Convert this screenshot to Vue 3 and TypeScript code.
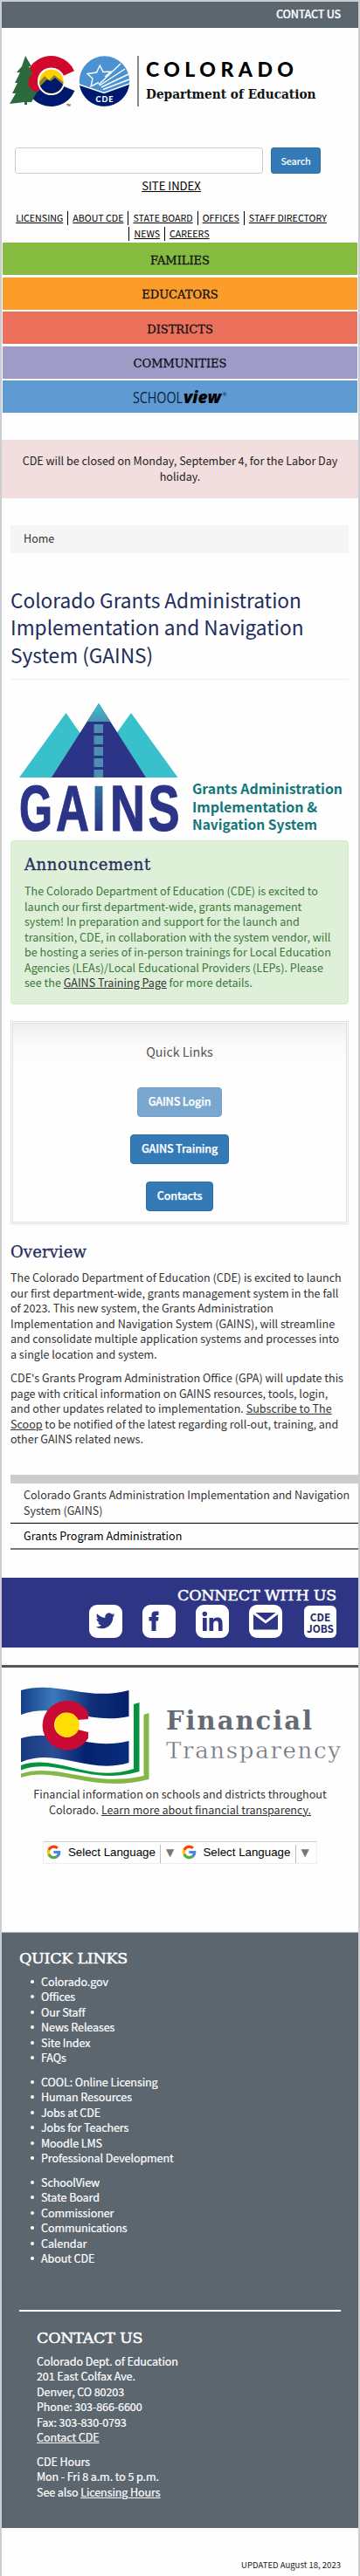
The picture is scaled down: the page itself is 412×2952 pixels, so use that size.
<script setup lang="ts">
interface Bar { label: string; tone: string }

const navRows: string[][] = [
  ['LICENSING', 'ABOUT CDE', 'STATE BOARD', 'OFFICES', 'STAFF DIRECTORY'],
  ['NEWS', 'CAREERS'],
]
const bars: Bar[] = [
  { label: 'FAMILIES', tone: 'green' },
  { label: 'EDUCATORS', tone: 'orange' },
  { label: 'DISTRICTS', tone: 'red' },
  { label: 'COMMUNITIES', tone: 'purple' },
]
const linkGroups: string[][] = [
  ['Colorado.gov', 'Offices', 'Our Staff', 'News Releases', 'Site Index', 'FAQs'],
  ['COOL: Online Licensing', 'Human Resources', 'Jobs at CDE', 'Jobs for Teachers', 'Moodle LMS', 'Professional Development'],
  ['SchoolView', 'State Board', 'Commissioner', 'Communications', 'Calendar', 'About CDE'],
]
const dashes = [30, 43, 56, 69, 82]
</script>

<template>
  <div class="page">
    <div class="topbar"><a>CONTACT US</a></div>

    <header class="brand">
      <svg class="logo" width="356" height="62" viewBox="9 62 356 62">
        <path d="M78.900 83.900 A22.300 22.300 0 1 0 40.700 106.400" fill="none" stroke="#d0082c" stroke-width="13.400" />
        <path d="M40.700 106.400 A22.300 22.300 0 0 0 79.200 101.400" fill="none" stroke="#001970" stroke-width="13.400" />
        <path d="M29 64 L36 76 L33 76 L37 84 Q30 91 34 101 L42 106 L36 117 L31 117 L31 120 L28 120 L28 117 L11 119 L18 107 L14 107 L20 95 L17 95 L23 83 L19 83 L25 76 Z" fill="#2a6a3c" />
        <circle cx="58.800" cy="93.500" r="15.500" fill="#fff" />
        <circle cx="58.800" cy="93.500" r="13.800" fill="#ffd100" />
        <path d="M45 94 L51 87 L56 92 L62 86 L72.500 94 A13.800 13.800 0 0 1 45 94Z" fill="#8a8527" />
        <path d="M46 98.500 L54 91 L58 93 L63 89 L72 97 A13.800 13.800 0 0 1 46 98.500Z" fill="#001970" />
        <circle cx="119.500" cy="93" r="28.700" fill="#4b92d3" />
        <path d="M91 97 L119 106 L148 96 A28.700 28.700 0 0 1 91 97Z" fill="#001970" />
        <path d="M91 97 L119 106.500 L148 96" fill="none" stroke="#fff" stroke-width="1.500" />
        <path d="M113 94.500 L104 99 L106 90 L100 84.500 L110.500 83 L114.300 75 L118 82.500 L127 82 L120 88 M113 97 L138 73 M114 98 L143 79 M116 100 L147 85 M118 102.500 L148 91" fill="none" stroke="#fff" stroke-width="1.400" />
        <text x="109.500" y="116.500" textLength="20" class="t-lato" font-size="9" fill="#fff">CDE</text>
        <text x="76" y="122" font-size="3" class="t-lato" fill="#333">TM</text>
        <rect x="157" y="64" width="2" height="58" fill="#888" />
        <text x="167" y="88" textLength="169" class="t-lato" font-size="23" fill="#000">COLORADO</text>
        <text x="167" y="113" textLength="194.500" lengthAdjust="spacingAndGlyphs" class="t-slab-b" font-size="14" fill="#111">Department of Education</text>
      </svg>
    </header>

    <div class="search">
      <input type="text" aria-label="Search" />
      <button type="button">Search</button>
    </div>
    <div class="siteindex"><a>SITE INDEX</a></div>

    <nav class="nav">
      <div v-for="(row, i) in navRows" :key="i" class="navrow" :class="{ cont: i > 0 }">
        <span v-for="item in row" :key="item" class="navitem"><a>{{ item }}</a></span>
      </div>
    </nav>

    <div class="bars">
      <div v-for="b in bars" :key="b.label" class="bar" :class="b.tone">{{ b.label }}</div>
      <div class="bar blue">
        <svg width="110" height="24" viewBox="0 0 110 24">
          <text x="1" y="16.500" textLength="57" lengthAdjust="spacingAndGlyphs" class="t-school" font-size="18" fill="#0a1f3c">SCHOOL</text>
          <text x="59" y="16.500" textLength="43" lengthAdjust="spacingAndGlyphs" class="t-view" font-size="20" fill="#000">view</text>
          <text x="103.500" y="9" class="t-school" font-size="6" fill="#0a1f3c">®</text>
        </svg>
      </div>
    </div>

    <div class="alert">CDE will be closed on Monday, September 4, for the Labor Day<br />holiday.</div>
    <div class="crumb">Home</div>

    <h1>Colorado Grants Administration<br />Implementation and Navigation<br />System (GAINS)</h1>

    <svg class="gains" width="388" height="160" viewBox="10 0 388 160">
      <defs>
        <linearGradient id="peak" x1="0" y1="0" x2="0" y2="1"><stop offset="0" stop-color="#38c5cf" /><stop offset="1" stop-color="#4a93b4" /></linearGradient>
        <linearGradient id="eye" gradientUnits="userSpaceOnUse" x1="0" y1="98" x2="0" y2="152"><stop offset="0" stop-color="#35739f" /><stop offset="1" stop-color="#2b3486" /></linearGradient>
      </defs>
      <path d="M75.500 17 L127 91 H22Z M150 17 L203.500 91 H97Z" fill="#38c0cb" />
      <path d="M113 6 L167 91 H59Z" fill="#2b3486" />
      <path d="M113 6 L126 27 H100Z" fill="url(#peak)" />
      <rect v-for="(y, i) in dashes" :key="i" x="107.500" :y="y" width="10.500" :height="i === 4 ? 9 : 10" fill="#4c8fb3" />
      <g class="t-arial" font-size="74" fill="#2b3486" stroke="#2b3486" stroke-width="1.200">
        <text x="22" y="151.500" textLength="38" lengthAdjust="spacingAndGlyphs">G</text>
        <text x="64" y="151.500" textLength="38" lengthAdjust="spacingAndGlyphs">A</text>
        <text x="126" y="151.500" textLength="40" lengthAdjust="spacingAndGlyphs">N</text>
        <text x="169.500" y="151.500" textLength="36" lengthAdjust="spacingAndGlyphs">S</text>
        <text x="104.500" y="151.500" textLength="17" lengthAdjust="spacingAndGlyphs" fill="url(#eye)" stroke="none">I</text>
      </g>
      <g class="t-sans" font-size="15.500" fill="#12767a">
        <text x="220" y="110" textLength="172" lengthAdjust="spacingAndGlyphs">Grants Administration</text>
        <text x="220" y="131" textLength="143" lengthAdjust="spacingAndGlyphs">Implementation &amp;</text>
        <text x="220" y="151" textLength="143" lengthAdjust="spacingAndGlyphs">Navigation System</text>
      </g>
    </svg>

    <section class="announce">
      <h2>Announcement</h2>
      <p>The Colorado Department of Education (CDE) is excited to<br />launch our first department-wide, grants management<br />system! In preparation and support for the launch and<br />transition, CDE, in collaboration with the system vendor, will<br />be hosting a series of in-person trainings for Local Education<br />Agencies (LEAs)/Local Educational Providers (LEPs). Please<br />see the <a>GAINS Training Page</a> for more details.</p>
    </section>

    <section class="quick">
      <div class="qtitle">Quick Links</div>
      <a class="btn faded">GAINS Login</a>
      <a class="btn">GAINS Training</a>
      <a class="btn">Contacts</a>
    </section>

    <section class="overview">
      <h2>Overview</h2>
      <p>The Colorado Department of Education (CDE) is excited to launch<br />our first department-wide, grants management system in the fall<br />of 2023. This new system, the Grants Administration<br />Implementation and Navigation System (GAINS), will streamline<br />and consolidate multiple application systems and processes into<br />a single location and system.</p>
      <p>CDE's Grants Program Administration Office (GPA) will update this<br />page with critical information on GAINS resources, tools, login,<br />and other updates related to implementation. <a>Subscribe to The<br />Scoop</a> to be notified of the latest regarding roll-out, training, and<br />other GAINS related news.</p>
    </section>

    <aside class="side">
      <div class="s1">Colorado Grants Administration Implementation and Navigation<br />System (GAINS)</div>
      <div class="s2">Grants Program Administration</div>
    </aside>

    <section class="connect">
      <h3>CONNECT WITH US</h3>
      <div class="icons">
        <svg width="38" height="38" viewBox="0 0 38 38"><rect width="38" height="38" rx="9" fill="#fff" /><path transform="translate(7.700 7.400) scale(.91)" fill="#2e3584" d="M23.953 4.570a10 10 0 01-2.825.775 4.958 4.958 0 002.163-2.723c-.951.555-2.005.959-3.127 1.184a4.920 4.920 0 00-8.384 4.482C7.690 8.095 4.067 6.130 1.640 3.162a4.822 4.822 0 00-.666 2.475c0 1.710.870 3.213 2.188 4.096a4.904 4.904 0 01-2.228-.616v.060a4.923 4.923 0 003.946 4.827 4.996 4.996 0 01-2.212.085 4.936 4.936 0 004.604 3.417 9.867 9.867 0 01-6.102 2.105c-.390 0-.779-.023-1.170-.067a13.995 13.995 0 007.557 2.209c9.053 0 13.998-7.496 13.998-13.985 0-.210 0-.420-.015-.630A9.935 9.935 0 0024 4.590z" /></svg>
        <svg width="38" height="38" viewBox="0 0 38 38"><rect width="38" height="38" rx="9" fill="#fff" /><path d="M10.500 30 V18.500 H7.500 V14 H10.500 V12 C10.500 8.500 12.500 7.500 15 7.500 H18.500 V12 H16.800 C15.800 12 15.500 12.500 15.500 13.500 V14 H18.500 L18 18.500 H15.500 V30Z" fill="#2e3584" /></svg>
        <svg width="38" height="38" viewBox="0 0 38 38"><rect width="38" height="38" rx="9" fill="#fff" /><path d="M8 15h4.700v15H8zM15.500 15H20v2c1-1.600 2.600-2.400 4.800-2.400 4.400 0 5.800 2.700 5.800 7V30H26v-7.600c0-2.300-.5-3.800-2.600-3.800-2.300 0-3.200 1.600-3.200 3.800V30h-4.700z" fill="#2e3584" /><circle cx="10.300" cy="10.500" r="2.700" fill="#2e3584" /></svg>
        <svg width="38" height="38" viewBox="0 0 38 38"><rect width="38" height="38" rx="9" fill="#fff" /><path d="M5 11 L19 21.500 L33 11 V28.500 H5Z M7.500 9 H30.500 L19 18Z" fill="#2e3584" /></svg>
        <div class="jobs"><span>CDE</span><span>JOBS</span></div>
      </div>
    </section>

    <section class="fin">
      <svg width="372" height="120" viewBox="20 0 372 120">
        <defs>
          <linearGradient id="sky" x1="0" y1="0" x2="1" y2="0"><stop offset="0" stop-color="#143f86" /><stop offset=".3" stop-color="#3c7abb" /><stop offset=".65" stop-color="#0f2f78" /><stop offset="1" stop-color="#051f6c" /></linearGradient>
          <linearGradient id="sea" x1="0" y1="0" x2="1" y2="0"><stop offset="0" stop-color="#16397f" /><stop offset=".3" stop-color="#2c4d96" /><stop offset=".6" stop-color="#04226e" /><stop offset="1" stop-color="#0a2d7c" /></linearGradient>
        </defs>
        <path d="M24 5 C65 -7 100 18 147.500 5 V35 C100 45 65 18 24 33Z" fill="url(#sky)" />
        <path d="M24 60 C65 48 100 75 147.500 63 V88 C100 102 65 70 24 87.500Z" fill="url(#sea)" />
        <path d="M24 91 C65 77 100 112 153 95 V21 L159.500 19 V98 C103 115 65 81 24 96.500Z" fill="#059341" />
        <path d="M24 100.500 C65 87 105 117 164.500 103 V33 L170.500 31 V107 C107 124 65 91 24 105Z" fill="#84b747" />
        <path d="M101 30.500 A28.300 28.300 0 1 0 101 60 L101 53 L89 50 A14 14 0 1 1 89 39 L101 38Z" fill="#c80a35" />
        <circle cx="76.700" cy="44.700" r="14.200" fill="#ffdd04" />
        <text x="190" y="50" textLength="167" class="t-slab-b" font-size="29" fill="#646b75">Financial</text>
        <text x="190" y="82.500" textLength="200" class="t-slab" font-size="26" fill="#6d7279" stroke="#fff" stroke-width=".4">Transparency</text>
      </svg>
      <p>Financial information on schools and districts throughout<br />Colorado. <a>Learn more about financial transparency.</a></p>
    </section>

    <div class="translate">
      <div v-for="n in 2" :key="n" class="lang">
        <svg width="17" height="17" viewBox="2 2 44 44"><path fill="#FFC107" d="M43.611 20.083H42V20H24v8h11.303c-1.649 4.657-6.080 8-11.303 8-6.627 0-12-5.373-12-12s5.373-12 12-12c3.059 0 5.842 1.154 7.961 3.039l5.657-5.657C34.046 6.053 29.268 4 24 4 12.955 4 4 12.955 4 24s8.955 20 20 20 20-8.955 20-20c0-1.341-.138-2.650-.389-3.917z" /><path fill="#FF3D00" d="M6.306 14.691l6.571 4.819C14.655 15.108 18.961 12 24 12c3.059 0 5.842 1.154 7.961 3.039l5.657-5.657C34.046 6.053 29.268 4 24 4 16.318 4 9.656 8.337 6.306 14.691z" /><path fill="#4CAF50" d="M24 44c5.166 0 9.860-1.977 13.409-5.192l-6.190-5.238A11.910 11.910 0 0124 36c-5.202 0-9.619-3.317-11.283-7.946l-6.522 5.025C9.505 39.556 16.227 44 24 44z" /><path fill="#4285F4" d="M43.611 20.083H42V20H24v8h11.303a12.040 12.040 0 01-4.087 5.571l6.190 5.238C36.971 39.205 44 34 44 24c0-1.341-.138-2.650-.389-3.917z" /></svg>
        <span class="sel">Select Language</span><span class="tri">▼</span>
      </div>
    </div>

    <footer class="foot">
      <h3>QUICK LINKS</h3>
      <ul v-for="(g, i) in linkGroups" :key="i">
        <li v-for="l in g" :key="l">{{ l }}</li>
      </ul>
      <div class="contact">
        <h3>CONTACT US</h3>
        <p>Colorado Dept. of Education<br />201 East Colfax Ave.<br />Denver, CO 80203<br />Phone: 303-866-6600<br />Fax: 303-830-0793<br /><a>Contact CDE</a></p>
        <p>CDE Hours<br />Mon - Fri 8 a.m. to 5 p.m.<br />See also <a>Licensing Hours</a></p>
      </div>
    </footer>
    <div class="updated">UPDATED August 18, 2023</div>
  </div>
</template>

<style>
body { margin: 0; background: #fff; }
</style>

<style scoped>
.page, .page * { box-sizing: border-box; }
.page {
  width: 412px; height: 2952px; overflow: hidden;
  border: 2px solid #cccdd1; border-bottom: 0; background: #fefefe;
  font: 12.55px/17.5px "Noto Sans CJK SC", "Open Sans", sans-serif; color: #333;
  white-space: nowrap;
}
svg { overflow: visible; }
h1, h2, h3, p, ul { margin: 0; padding: 0; font-weight: normal; }
a { text-decoration: underline; }
h2, h3, .bar { font-family: "DejaVu Serif", serif; -webkit-text-stroke: .3px currentColor; }
.t-lato { font-family: Lato, sans-serif; font-weight: 900; }
.t-slab-b { font-family: "DejaVu Serif", serif; font-weight: bold; }
.t-slab { font-family: "DejaVu Serif", serif; }
.t-school { font-family: "Open Sans", sans-serif; font-weight: 400; }
.t-view { font-family: "Open Sans", sans-serif; font-weight: 800; font-style: italic; }
.t-arial { font-family: "Liberation Sans", Arial, sans-serif; font-weight: bold; }
.t-sans { font-family: "Noto Sans CJK SC", sans-serif; font-weight: bold; }
.bar svg { -webkit-text-stroke: 0; }

.topbar { height: 30px; background: #5c666f; color: #fff; text-align: right; padding: 5px 20px 0 0; font-weight: 500; letter-spacing: -.22px; -webkit-text-stroke: .2px #fff; }
.topbar a { text-decoration: none; }
.brand { height: 137px; padding: 30px 0 0 7px; }
.logo { display: block; }
.search { display: flex; gap: 9px; padding-left: 15px; height: 30px; }
.search input { width: 284px; height: 30px; border: 1px solid #ccc; border-radius: 3px; background: #fff; }
.search button { width: 57px; height: 30px; border: 1px solid #2e6da4; border-radius: 3px; background: #337ab7; color: #fff; font: 500 10.8px/17px "Noto Sans CJK SC", sans-serif; letter-spacing: -.2px; padding: 0; }
.siteindex { width: 388px; text-align: center; color: #000; font-size: 13.100px; padding-top: 5px; height: 43px; }
.nav { height: 36px; width: 388px; font-size: 10.650px; color: #000; }
.navrow { display: flex; justify-content: center; height: 17.500px; }
.navitem { padding: 0 5px; border-left: 1px solid #000; height: 16px; line-height: 15.500px; }
.cont .navitem { line-height: 16.500px; }
.navrow:not(.cont) .navitem:first-child { border-left: 0; }
.bars { display: flex; flex-direction: column; gap: 2.500px; padding: 0 1px; }
.bar { height: 37px; display: flex; align-items: center; justify-content: center; color: #111; font-size: 13px; padding-top: 4px; }
.green { background: #86bc40; }
.orange { background: #fb9c2b; }
.red { background: #ec715d; }
.purple { background: #9e9bc9; }
.blue { background: #5f9ad2; }
.alert { margin-top: 31px; height: 67px; background: #f2dede; border: 1px solid #ebdcdf; text-align: center; padding-top: 14px; color: #222; }
.crumb { margin: 31px 11px 0 10px; height: 32px; background: #f5f5f5; padding: 6px 15px; }
h1 { margin: 38px 11px 0 10px; height: 107px; font-size: 22.650px; line-height: 31.300px; color: #222c5c; border-bottom: 1px solid #eee; }
.gains { display: block; margin: 21px 0 0 8px; }
h2 { color: #262b60; font-size: 18px; line-height: 22px; }
.announce { margin: 3px 11px 0 10px; height: 188px; background: #dff0d8; border: 1px solid #d6e9c6; border-radius: 4px; padding: 16px 15px 0; color: #3c763d; }
.announce h2 { letter-spacing: .620px; }
.announce p { margin-top: 10px; }
.announce a { color: #333; }
.quick { margin: 19px 11px 0 10px; height: 233px; border: 3px double #e0e0e3; background: linear-gradient(#f0f0f0, #fafafa 24px, #fefefe 52px) padding-box; display: flex; flex-direction: column; align-items: center; }
.qtitle { color: #555; font-size: 14.300px; line-height: 20px; margin-top: 22px; margin-bottom: 31px; flex-shrink: 0; }
.btn { flex-shrink: 0; background: #337ab7; color: #fff; font-weight: 500; letter-spacing: -.150px; -webkit-text-stroke: .25px #fff; border: 1px solid #2e6da4; border-radius: 4px; height: 34px; line-height: 29px; padding: 0 12px; text-decoration: none; margin-bottom: 20px; }
.btn:last-child { margin-bottom: 0; }
.faded { opacity: .65; }
.overview { margin: 21px 0 0 10px; }
.overview h2 { margin-bottom: 9px; letter-spacing: .100px; }
.overview p { margin-bottom: 10px; }
.side { margin: 32.500px -2px 0 10px; border-top: 10px solid #ccc; height: 118px; }
.s1 { padding: 4px 15px 0; height: 46px; border-bottom: 1px solid #000; }
.s2 { padding: 5px 15px 0; height: 30px; border-bottom: 2px solid #77787b; color: #000; margin-right: 2px; }
.connect { height: 80px; background: #2e3584; padding: 9px 25px 0 0; }
.connect h3, .foot h3 { color: #fff; font-size: 17.500px; line-height: 22px; letter-spacing: -.260px; -webkit-text-stroke: .5px #fff; }
.connect h3 { text-align: right; }
.icons { display: flex; justify-content: flex-end; gap: 23px; }
.jobs { width: 37px; height: 37px; margin: 1px 0 0 2px; background: #fff; border-radius: 6px; color: #202868; font: bold 11.800px/13px "Noto Sans CJK SC", sans-serif; display: flex; flex-direction: column; align-items: center; justify-content: center; }
.fin { margin-top: 20px; border-top: 3px solid #55565a; text-align: center; height: 202px; padding-top: 21px; }
.fin svg { display: block; margin-left: 18px; }
.fin p { margin-top: -5px; }
.translate { margin-left: 47px; width: 314px; height: 26px; border: 1px solid #eee; border-top-color: #ccc; display: flex; padding: 3px 0 0 3px; }
.lang { display: flex; width: 155.500px; font: 13.300px/18px "Liberation Sans", Arial, sans-serif; color: #000; }
.sel { margin-left: 8px; width: 106px; border-right: 1px solid #bbb; }
.tri { color: #777; margin-left: 6px; font-family: "DejaVu Sans", sans-serif; font-size: 12px; }
.foot { margin-top: 78px; height: 683px; background: #5b666f; border-top: 1px solid #a9afb5; color: #fff; font-weight: 500; letter-spacing: -.100px; -webkit-text-stroke: .2px #fff; padding: 18px 20px 0; }
.foot ul { list-style: none; margin-bottom: 10px; padding-left: 25px; }
.foot h3 { margin-bottom: 6.500px; }
.foot li { position: relative; }
.foot li::before { content: ""; position: absolute; left: -12px; top: 7px; width: 4px; height: 4px; border-radius: 50%; background: #fff; }
.contact { border-top: 2px solid #fff; margin-top: 50.500px; padding: 19px 20px 0; }
.contact p { margin-bottom: 10px; }
.updated { text-align: right; padding: 35px 20px 0 0; font-size: 9.550px; line-height: 15px; color: #222; }
</style>
